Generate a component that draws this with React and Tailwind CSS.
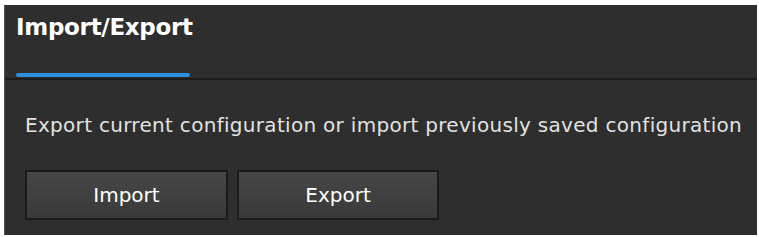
export default function App() {
  return (
    <div className="w-[759px] h-[237px] bg-white pt-[5px] pl-[4px] pr-[2px] pb-[2px]">
      <div
        className="h-[230px] bg-[#2e2e2e] border-l border-[#555]"
        style={{ fontFamily: '"DejaVu Sans", "Liberation Sans", sans-serif' }}
      >
        {/* header with tab */}
        <div className="h-[75px] border-b-2 border-[#1c1c1c] flex flex-col justify-between">
          <div className="pl-[11px] pt-[8px] text-[23px] leading-[28px] font-bold text-white tracking-[-0.3px]">
            Import/Export
          </div>
          <div className="ml-[11px] mb-[1px] w-[174px] h-[4px] bg-[#2b8fdc] rounded-sm" />
        </div>

        <div className="pl-[20px] pt-[33px] text-[20px] text-[#e2e2e2] tracking-[0.3px] leading-[24px]">
          Export current configuration or import previously saved configuration
        </div>

        <div className="flex gap-[9px] pl-[20px] pt-[33px]">
          <button className="w-[203px] h-[50px] border-2 border-[#1b1b1b] bg-gradient-to-b from-[#474747] to-[#393939] text-[20px] text-white">
            Import
          </button>
          <button className="w-[202px] h-[50px] border-2 border-[#1b1b1b] bg-gradient-to-b from-[#474747] to-[#393939] text-[20px] text-white">
            Export
          </button>
        </div>
      </div>
    </div>
  );
}
